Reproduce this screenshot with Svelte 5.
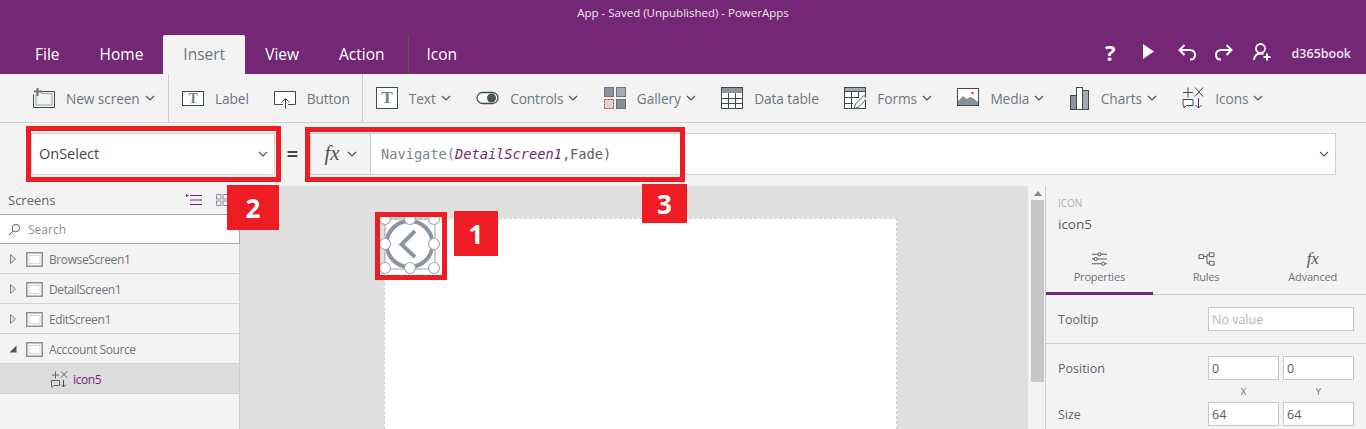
<script>
  const tabs = ['File', 'Home', 'Insert', 'View', 'Action'];
  const screens = ['BrowseScreen1', 'DetailScreen1', 'EditScreen1'];
</script>

{#snippet chevron()}
  <svg class="chev" viewBox="0 0 10 6" width="10" height="6"><path d="M1 1l4 4 4-4" fill="none" stroke="#4a4f57" stroke-width="1.1" /></svg>
{/snippet}

{#snippet tool(icon, label, chev, w = 22)}
  <div class="tool">
    <svg class="tool-icon" viewBox="0 0 {w} 24" width={w} height="24">{@render icon()}</svg>
    <span>{label}</span>
    {#if chev}{@render chevron()}{/if}
  </div>
{/snippet}

{#snippet newScreen()}
  <g fill="none" stroke="#3e4b4b"><path d="M6 5.5h15.5v16H.5v-13" /><path d="M3 8v11h16V7.5H8" stroke="#9aa0a0" /></g>
  <path d="M4.5 2v8M1 5.5h8" stroke="#6b7474" stroke-width="2" />
{/snippet}
{#snippet labelIcon()}
  <rect x=".5" y="5.5" width="21" height="14" fill="#fff" stroke="#3e4b4b" />
  <text x="11" y="17" text-anchor="middle" class="t-glyph" font-size="14">T</text>
{/snippet}
{#snippet buttonIcon()}
  <path d="M14 18.5h7.5v-13H.5v13H9" fill="#fff" stroke="#3e4b4b" />
  <path d="M11.5 22.5V13M7.5 16.5l4-4 4 4" fill="none" stroke="#3e4b4b" />
{/snippet}
{#snippet textIcon()}
  <rect x=".5" y="1.5" width="21" height="21" fill="#fff" stroke="#3e4b4b" />
  <text x="11" y="17" text-anchor="middle" class="t-glyph" font-size="17">T</text>
{/snippet}
{#snippet controlsIcon()}
  <rect x="1" y="6.5" width="21" height="11" rx="5.5" fill="#fff" stroke="#3e4b4b" stroke-width="1.3" />
  <circle cx="15.5" cy="12" r="4.5" fill="#4b5555" />
{/snippet}
{#snippet galleryIcon()}
  <rect x=".5" y="1.5" width="9" height="9" fill="#8a929c" stroke="#6b737d" />
  <rect x="12.5" y="1.5" width="9" height="9" fill="#a5abb3" stroke="#6b737d" />
  <rect x=".5" y="13.5" width="9" height="9" fill="#d8d8d8" stroke="#e8232b" stroke-dasharray="2 1" />
  <rect x="12.5" y="13.5" width="9" height="9" fill="#858d97" stroke="#6b737d" />
{/snippet}
{#snippet tableIcon()}
  <rect x=".5" y="1.5" width="21" height="21" fill="#fff" stroke="#3e4b4b" />
  <rect x="1" y="2" width="20" height="5" fill="#8e959d" />
  <path d="M1 12.5h20M1 17.5h20M7.5 7v15M14.5 7v15" stroke="#3e4b4b" fill="none" />
{/snippet}
{#snippet formsIcon()}
  <rect x=".5" y="1.5" width="21" height="21" fill="#fff" stroke="#3e4b4b" />
  <rect x="1" y="2" width="20" height="3" fill="#a5abb3" />
  <path d="M1 5.5h20M1 11.5h14M1 17.5h8M7.5 5v17M14.5 5v7" stroke="#3e4b4b" fill="none" />
  <path d="M10 23l1.5-5L20 9.5l3 3-8.5 8.5z" fill="#fff" stroke="#4b5555" />
{/snippet}
{#snippet mediaIcon()}
  <rect x=".5" y="2.5" width="21" height="17" fill="#fff" stroke="#3e4b4b" />
  <path d="M1 19v-4l5-5 4 3 3-2 3 1 5 4v3z" fill="#8a929c" />
  <circle cx="15.5" cy="7" r="1.2" fill="#e8232b" />
{/snippet}
{#snippet chartsIcon()}
  <rect x=".5" y="9.5" width="6" height="14" fill="#8e959d" stroke="#3e4b4b" />
  <rect x="6.5" y="1.5" width="6" height="22" fill="#fff" stroke="#3e4b4b" />
  <rect x="12.5" y="4.5" width="6" height="19" fill="#a5abb3" stroke="#3e4b4b" />
{/snippet}
{#snippet iconsIcon()}
  <path d="M1 6.5h10M6 1.5v10M13 1.5l8 9M21 1.5l-8 9" stroke="#3e4b4b" fill="none" />
  <path d="M1 13.5h10v6H4.5L2 22v-2.5H1z" fill="#fff" stroke="#3e4b4b" />
  <path d="M16.5 12v10" stroke="#742774" /><path d="M13.5 19l3 3 3-3" fill="none" stroke="#3e4b4b" />
{/snippet}

{#snippet screenIcon()}
  <svg class="screen-icon" viewBox="0 0 17 15" width="17" height="15"><rect x=".75" y=".75" width="15.5" height="13.5" fill="#f7f7f7" stroke="#8b919b" stroke-width="1.5" /><path d="M3 3.5h11v8H3z" fill="#fff" stroke="#c4c7cc" stroke-width=".6" /></svg>
{/snippet}

<div class="app">
  <header class="titlebar">
    <div class="title">App - Saved (Unpublished) - PowerApps</div>
    <div class="tabrow">
      <nav class="tabs">
        {#each tabs as tab}
          <span class="tab" class:active={tab === 'Insert'}>{tab}</span>
        {/each}
        <span class="tab context">Icon</span>
      </nav>
      <div class="actions">
        <span class="help">?</span>
        <svg class="play" viewBox="0 0 11 15" width="11" height="15"><path d="M0 0l11 7.5L0 15z" fill="#fff" /></svg>
        <svg viewBox="0 0 18 18" width="18" height="18"><path d="M6.5 2L1.5 7l5 5M1.5 7h10c3.5 0 5.5 2 5.5 5s-2 4.5-5 4.5" fill="none" stroke="#fff" stroke-width="2" /></svg>
        <svg class="redo" viewBox="0 0 18 18" width="18" height="18"><path d="M11.5 2l5 5-5 5M16.5 7h-10C3 7 1 9 1 12s2 4.5 5 4.5" fill="none" stroke="#fff" stroke-width="2" /></svg>
        <svg viewBox="0 0 18 18" width="18" height="18"><circle cx="7.5" cy="5.5" r="4.5" fill="none" stroke="#fff" stroke-width="1.8" /><path d="M1 17c.5-4 2.5-6.5 6.5-6.5 1.5 0 2 .2 3 .7" fill="none" stroke="#fff" stroke-width="1.8" /><path d="M14 10.5v7M10.5 14h7" stroke="#fff" stroke-width="2" /></svg>
        <span class="user">d365book</span>
      </div>
    </div>
  </header>

  <div class="toolbar">
    <div class="tool-group first">{@render tool(newScreen, 'New screen', true)}</div>
    <div class="tool-group">
      {@render tool(labelIcon, 'Label', false)}
      {@render tool(buttonIcon, 'Button', false)}
    </div>
    <div class="tool-group last">
      {@render tool(textIcon, 'Text', true)}
      {@render tool(controlsIcon, 'Controls', true, 23)}
      {@render tool(galleryIcon, 'Gallery', true)}
      {@render tool(tableIcon, 'Data table', false)}
      {@render tool(formsIcon, 'Forms', true)}
      {@render tool(mediaIcon, 'Media', true)}
      {@render tool(chartsIcon, 'Charts', true, 20)}
      {@render tool(iconsIcon, 'Icons', true)}
    </div>
  </div>

  <div class="formula-row">
    <div class="prop-select">
      <span>OnSelect</span>
      {@render chevron()}
    </div>
    <div class="equals">=</div>
    <div class="formula">
      <div class="fx"><i>fx</i>{@render chevron()}</div>
      <div class="code">Navigate(<em>DetailScreen1</em><b>,Fade)</b></div>
      {@render chevron()}
    </div>
  </div>

  <main class="workspace">
    <aside class="left">
      <div class="left-head">
        <span>Screens</span>
        <div class="view-toggle">
          <svg viewBox="0 0 16 12" width="16" height="12"><path d="M4 1.5h12M4 6h12M4 10.5h12" stroke="#742774" stroke-width="1.2" /><path d="M0 0l3 1.5L0 3z" fill="#742774" /></svg>
          <svg viewBox="0 0 12 12" width="12" height="12"><path d="M.5.5H5V5H.5zM7 .5h4.5V5H7zM.5 7H5v4.5H.5zM7 7h4.5v4.5H7z" fill="none" stroke="#8b919b" /></svg>
        </div>
      </div>
      <div class="search">
        <svg viewBox="0 0 14 14" width="13" height="13"><circle cx="8.5" cy="5.5" r="4" fill="none" stroke="#555" /><path d="M5.5 8.5L1 13" stroke="#555" /></svg>
        <span>Search</span>
      </div>
      {#each screens as name}
        <div class="tree-row">
          <svg class="caret" viewBox="0 0 6 10" width="6" height="10"><path d="M.5.5L5.5 5 .5 9.5z" fill="#dfe1e4" stroke="#7d838c" /></svg>
          {@render screenIcon()}
          <span>{name}</span>
        </div>
      {/each}
      <div class="tree-row">
        <svg class="caret" viewBox="0 0 8 8" width="8" height="8"><path d="M7.5.5v7H.5z" fill="#555" /></svg>
        {@render screenIcon()}
        <span>Acccount Source</span>
      </div>
      <div class="tree-row child">
        <svg viewBox="0 0 17 17" width="17" height="17"><path d="M1 4h7M4.5.5v7M10 .5l6 6M16 .5l-6 6" stroke="#5b6266" fill="none" /><path d="M.5 9.5h8v5H3L1 16.5v-2H.5z" fill="none" stroke="#5b6266" /><path d="M12.5 9v7" stroke="#742774" /><path d="M10 13.5l2.5 2.5 2.5-2.5" fill="none" stroke="#5b6266" /></svg>
        <span>icon5</span>
      </div>
    </aside>

    <section class="canvas">
      <div class="artboard"></div>
    </section>

    <div class="scroller">
      <svg viewBox="0 0 8 5" width="8" height="5"><path d="M4 0l4 5H0z" fill="#8a8a8a" /></svg>
      <div class="thumb"></div>
    </div>

    <aside class="right">
      <div class="right-head">
        <div class="kind">ICON</div>
        <div class="ctrl-name">icon5</div>
      </div>
      <div class="right-tabs">
        <div class="r-tab active">
          <svg viewBox="0 0 18 14" width="17" height="14"><path d="M1 2h16M1 7h16M1 12h16" stroke="#555" /><circle cx="9" cy="2" r="1.7" fill="#f3f3f3" stroke="#555" /><circle cx="5" cy="7" r="1.7" fill="#f3f3f3" stroke="#555" /><circle cx="13" cy="12" r="1.7" fill="#f3f3f3" stroke="#555" /></svg>
          <span>Properties</span>
        </div>
        <div class="r-tab">
          <svg viewBox="0 0 18 14" width="17" height="14"><path d="M1 2.5h5v4H1zM12 .5h5v4h-5zM12 9.5h5v4h-5zM6 4.5h3.5M12 2.5H9.5v9H12" fill="none" stroke="#555" /></svg>
          <span>Rules</span>
        </div>
        <div class="r-tab">
          <i class="r-fx">fx</i>
          <span>Advanced</span>
        </div>
      </div>
      <div class="prop tooltip">
        <label for="tt">Tooltip</label>
        <input id="tt" class="wide" placeholder="No value" />
      </div>
      <div class="prop-block">
        <div class="pair-row">
          <span class="prop-label">Position</span>
          <div class="pair"><input value="0" /><input value="0" /></div>
        </div>
        <div class="pair-caption"><span>X</span><span>Y</span></div>
        <div class="pair-row">
          <span class="prop-label">Size</span>
          <div class="pair"><input value="64" /><input value="64" /></div>
        </div>
      </div>
    </aside>
  </main>

  <!-- selected icon on the artboard, with its handles -->
  <svg class="selected-icon" viewBox="0 0 62 62" width="62" height="62">
    <rect x="5" y="5" width="50" height="50" fill="#fff" stroke="#9aa3ae" />
    <circle cx="29.5" cy="30" r="23" fill="#fff" stroke="#8a95a3" stroke-width="4" />
    <path d="M35 17L21.5 30.5 35 43" fill="none" stroke="#8a95a3" stroke-width="4" />
    {#each [5, 30, 54] as cy}
      {#each [5, 30, 54] as cx}
        {#if !(cx === 30 && cy === 30)}
          <circle {cx} {cy} r="5.5" fill="#fff" stroke="#a3a9b1" stroke-width="1.2" />
        {/if}
      {/each}
    {/each}
  </svg>

  <!-- callouts -->
  <div class="callout-box box-1"></div>
  <div class="callout-box box-2"></div>
  <div class="callout-box box-3"></div>
  <div class="badge badge-1">1</div>
  <div class="badge badge-2">2</div>
  <div class="badge badge-3">3</div>
</div>

<style>
  :global(body) {
    margin: 0;
    overflow: hidden;
  }

  .app {
    position: relative;
    display: flex;
    flex-direction: column;
    width: 1366px;
    height: 429px;
    overflow: hidden;
    background: #f3f3f3;
    color: #5e6670;
    font-family: "Open Sans", "Noto Sans", sans-serif;
    font-size: 13.5px;
  }

  /* title + tabs */
  .titlebar {
    height: 74px;
    flex-shrink: 0;
    display: flex;
    flex-direction: column;
    background: #742774;
    color: #fff;
  }

  .title {
    height: 27px;
    line-height: 26px;
    text-align: center;
    font-size: 11.5px;
    font-weight: 500;
    color: #f0e6f0;
  }

  .tabrow {
    flex: 1;
    display: flex;
    justify-content: space-between;
    padding-top: 8px;
  }

  .tabs {
    display: flex;
    padding-left: 15px;
  }

  .tab {
    padding: 0 20px;
    line-height: 39px;
    font-size: 15.5px;
  }

  .tab.active {
    background: #f3f3f3;
    color: #6f7680;
    border-radius: 2px 2px 0 0;
  }

  .tab.context {
    margin-left: 3px;
    border-left: 1px solid #4d5a45;
    padding-left: 18px;
  }

  .actions {
    display: flex;
    align-items: center;
    gap: 20px;
    padding: 0 15px 6px 0;
  }

  .help {
    font-size: 22px;
    font-weight: 700;
    margin-right: 7px;
  }

  .play {
    margin-right: 4px;
  }

  .redo {
    margin-left: -1px;
  }

  .user {
    font-size: 12.5px;
    font-weight: 600;
    color: #ece4ec;
    margin: 4px 0 0 1px;
  }

  /* ribbon */
  .toolbar {
    flex-shrink: 0;
    display: flex;
    align-items: stretch;
    border-bottom: 1px solid #cfcfcf;
    box-sizing: border-box;
    height: 49px;
  }

  .tool-group {
    display: flex;
    align-items: center;
    gap: 25px;
    padding: 0 12px 0 13px;
    border-right: 1px solid #cfcfcf;
  }

  .tool-group.first {
    padding-left: 33px;
    width: 169px;
    box-sizing: border-box;
  }

  .tool-group.last {
    border-right: 0;
    gap: 25.5px;
    padding-left: 13px;
  }

  .tool {
    display: flex;
    align-items: center;
    gap: 11px;
    color: #6f7680;
    white-space: nowrap;
    font-size: 13.7px;
    letter-spacing: -0.1px;
  }

  .tool .chev {
    margin-left: -6px;
  }

  .chev {
    flex-shrink: 0;
  }

  .t-glyph {
    font-family: "Liberation Serif", serif;
    font-weight: 700;
    fill: #7a8088;
  }

  /* formula bar */
  .formula-row {
    height: 63px;
    flex-shrink: 0;
    box-sizing: border-box;
    display: flex;
    align-items: center;
    padding: 0 30px 2px 31px;
  }

  .prop-select {
    width: 244px;
    height: 42px;
    box-sizing: border-box;
    display: flex;
    align-items: center;
    justify-content: space-between;
    padding: 0 6px 0 7px;
    background: #fff;
    border: 1px solid #cfcfcf;
    color: #3f4a4a;
    font-size: 14.5px;
  }

  .equals {
    width: 35px;
    text-align: center;
    font-size: 20px;
    font-weight: 700;
    color: #444;
  }

  .formula {
    flex: 1;
    height: 42px;
    box-sizing: border-box;
    display: flex;
    align-items: center;
    background: #fff;
    border: 1px solid #cfcfcf;
    padding-right: 6px;
  }

  .fx {
    width: 60px;
    height: 100%;
    box-sizing: border-box;
    display: flex;
    align-items: center;
    justify-content: center;
    gap: 7px;
    background: #f3f3f3;
    border-right: 1px solid #cfcfcf;
  }

  .fx i,
  .r-fx {
    font-family: "Liberation Serif", serif;
    font-size: 21px;
    color: #555;
  }

  .code {
    flex: 1;
    padding-left: 10px;
    font-family: "DejaVu Sans Mono", monospace;
    font-size: 13.67px;
    color: #7c8490;
  }

  .code em {
    color: #742774;
  }

  .code b {
    font-weight: 400;
    color: #5b6270;
  }

  /* body */
  .workspace {
    flex: 1;
    min-height: 0;
    display: flex;
  }

  .left {
    width: 240px;
    flex-shrink: 0;
    box-sizing: border-box;
    border-right: 1px solid #cfcfcf;
    font-size: 12px;
  }

  .left-head {
    height: 28px;
    display: flex;
    align-items: center;
    justify-content: space-between;
    padding: 0 11px 0 8px;
    font-size: 13px;
    color: #5f6670;
  }

  .view-toggle {
    display: flex;
    align-items: center;
    gap: 14px;
  }

  .search {
    height: 30px;
    box-sizing: border-box;
    display: flex;
    align-items: center;
    gap: 7px;
    padding-left: 8px;
    background: #fff;
    border: 1px solid #a6a6a6;
    border-left: 0;
    font-size: 12px;
    color: #8a9099;
    width: 240px;
  }

  .tree-row {
    height: 30px;
    box-sizing: border-box;
    display: flex;
    align-items: center;
    border-bottom: 1px solid #d2d2d2;
    padding: 1px 0 0 9px;
    color: #70767f;
    letter-spacing: -0.4px;
  }

  .caret {
    width: 8px;
    flex-shrink: 0;
  }

  .screen-icon {
    margin: 0 6px 0 9px;
  }

  .tree-row.child {
    background: #dcdcdc;
    padding-left: 51px;
    gap: 5px;
    color: #742774;
  }

  .canvas {
    flex: 1;
    background: #e0e0e0;
    padding: 32px 131px 0 144px;
    min-width: 0;
  }

  .artboard {
    height: 100%;
    background: #fff;
    border: 1px dashed #cfcfcf;
    border-bottom: 0;
    box-sizing: border-box;
  }

  .scroller {
    width: 18px;
    flex-shrink: 0;
    box-sizing: border-box;
    display: flex;
    flex-direction: column;
    align-items: center;
    gap: 4px;
    padding: 5px 1px 0 3px;
    border-right: 1px solid #cfcfcf;
  }

  .thumb {
    width: 100%;
    height: 182px;
    background: #c6c6c6;
  }

  .right {
    width: 320px;
    flex-shrink: 0;
    font-size: 12.5px;
  }

  .right-head {
    height: 54px;
    box-sizing: border-box;
    padding: 10px 12px 0;
  }

  .kind {
    font-size: 10px;
    color: #b3b3b3;
    line-height: 14px;
  }

  .ctrl-name {
    margin-top: 5px;
    font-size: 13.5px;
    color: #555d66;
  }

  .right-tabs {
    height: 55px;
    box-sizing: border-box;
    display: flex;
    border-bottom: 1px solid #cfcfcf;
  }

  .r-tab {
    flex: 1;
    display: flex;
    flex-direction: column;
    align-items: center;
    justify-content: flex-start;
    gap: 3px;
    padding-top: 12px;
    font-size: 11px;
    color: #6b727b;
    letter-spacing: -0.2px;
  }

  .r-tab.active {
    height: 55px;
    box-sizing: border-box;
    border-bottom: 3px solid #742774;
  }

  .r-fx {
    line-height: 14px;
    font-size: 17px;
  }

  .prop {
    display: flex;
    align-items: center;
    justify-content: space-between;
    padding: 0 12px;
  }

  .prop.tooltip {
    height: 49px;
    box-sizing: border-box;
    border-bottom: 1px solid #cfcfcf;
  }

  .prop label,
  .prop-label {
    color: #5e6670;
    font-size: 12.5px;
  }

  input {
    box-sizing: border-box;
    height: 24px;
    width: 71px;
    padding: 0 3px;
    border: 1px solid #c8c8c8;
    background: #fff;
    font: inherit;
    font-size: 12.5px;
    color: #555d66;
    outline: none;
    border-radius: 0;
  }

  input.wide {
    width: 146px;
  }

  input::placeholder {
    color: #b5b5b5;
    opacity: 1;
  }

  .prop-block {
    padding: 12px 12px 0;
  }

  .pair-row {
    display: flex;
    align-items: center;
    justify-content: space-between;
  }

  .pair {
    display: flex;
    gap: 4px;
  }

  .pair-caption {
    height: 22px;
    display: flex;
    justify-content: flex-end;
    align-items: center;
    font-size: 9.5px;
    color: #6b727b;
  }

  .pair-caption span {
    width: 71px;
    margin-left: 4px;
    text-align: center;
  }

  /* overlays */
  .selected-icon {
    position: absolute;
    left: 380px;
    top: 214px;
  }

  .callout-box {
    position: absolute;
    box-sizing: border-box;
    border: 5px solid #ee1c25;
  }

  .box-1 {
    left: 375px;
    top: 212px;
    width: 72px;
    height: 68px;
  }

  .box-2 {
    left: 26px;
    top: 126px;
    width: 255px;
    height: 56px;
  }

  .box-3 {
    left: 305px;
    top: 127px;
    width: 380px;
    height: 55px;
  }

  .badge {
    position: absolute;
    display: flex;
    align-items: center;
    justify-content: center;
    background: #ee1c25;
    color: #fff;
    font-family: "Open Sans", sans-serif;
    font-weight: 700;
    font-size: 26px;
  }

  .badge-1 {
    left: 454px;
    top: 211px;
    width: 44px;
    height: 45px;
  }

  .badge-2 {
    left: 227px;
    top: 185px;
    width: 52px;
    height: 45px;
  }

  .badge-3 {
    left: 642px;
    top: 184px;
    width: 45px;
    height: 39px;
  }
</style>
